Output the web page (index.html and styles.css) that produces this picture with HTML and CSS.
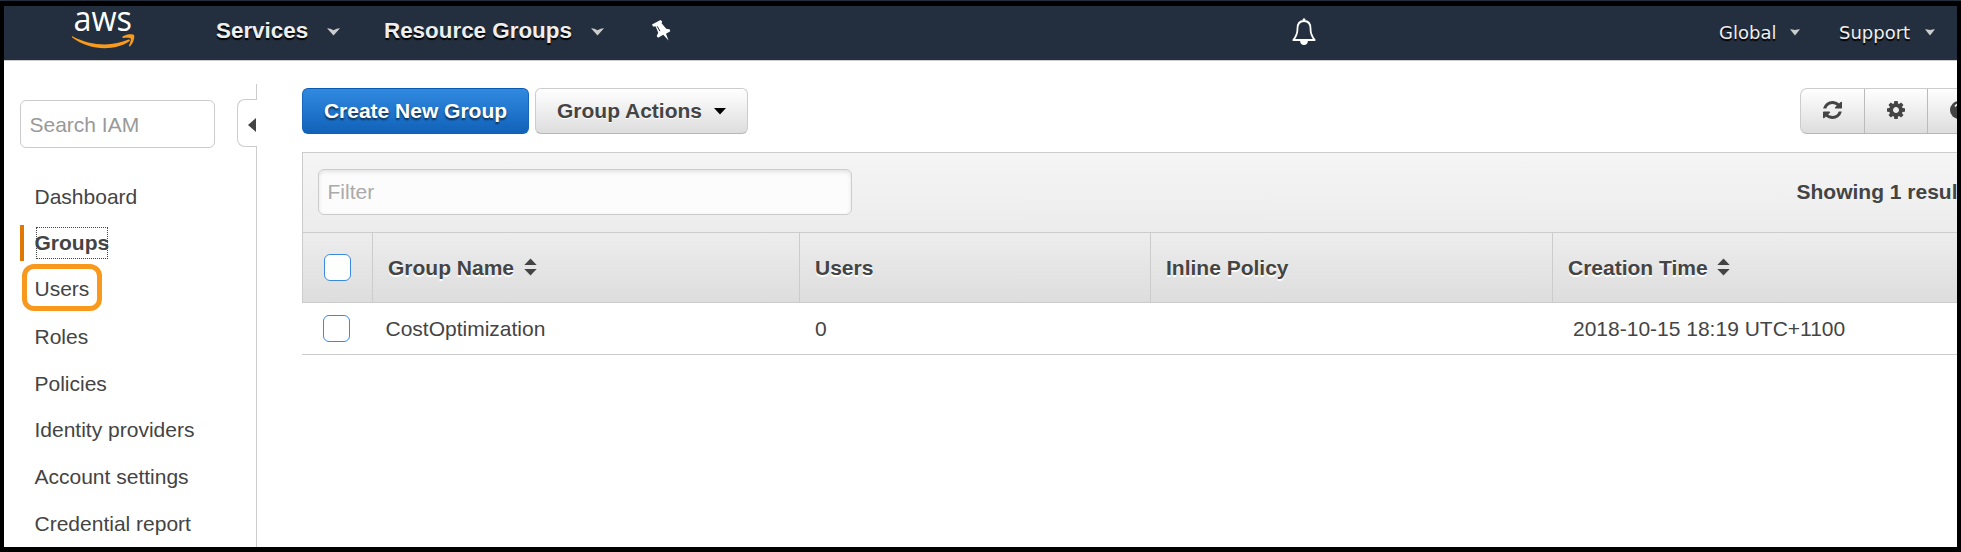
FILE: index.html
```html
<!DOCTYPE html>
<html lang="en">
<head>
<meta charset="utf-8">
<title>IAM Management Console</title>
<link rel="stylesheet" href="styles.css">
</head>
<body>
<div class="frame">
  <header class="topnav">
    <svg class="logo" width="64" height="44" viewBox="0 0 64 44">
      <text class="logo-text" x="1.500" y="25" textLength="58.500" lengthAdjust="spacingAndGlyphs">aws</text>
      <path class="smile" d="M.4 30.200C18 39.800 40 41 56.500 33.600C58 33 58.500 34.500 57.200 35.500C42 45.500 17 44.500 .2 31.500C-.5 30.800 0 30 .4 30.200Z"/>
      <path class="smile" d="M50.500 30.500C55 27.800 61 27.900 62 29.100C63 31 61.500 37.500 58 40.200C57.300 40.700 56.700 40.300 57 39.600C58 37 59.300 33.500 58.600 32.500C57.800 31.500 54 31.700 51.500 32C50.500 32.100 50 31.100 50.500 30.500Z"/>
    </svg>
    <a class="menu services">Services<svg class="caret" width="13" height="8" viewBox="0 0 13 8"><path d="M0 .3Q3.500 .3 6.500 2.300Q9.500 .3 13 .3L6.500 7.500Z"/></svg></a>
    <a class="menu resources">Resource Groups<svg class="caret" width="13" height="8" viewBox="0 0 13 8"><path d="M0 .3Q3.500 .3 6.500 2.300Q9.500 .3 13 .3L6.500 7.500Z"/></svg></a>
    <svg class="pin" width="19" height="21" viewBox="0 0 19 21"><path d="M0 4.500L8.500 0L10.200 1.600L9.600 3.200L14.200 8.700L17.600 9.300L18.300 11.300L14 13.700L16.500 20.500L11.300 14.800L6 17.800L4.700 16L6.200 12.700L3.700 6.500L1 6.600Z"/><path class="pin-line" d="M5.200 6.300L8 11.200"/></svg>
    <svg class="bell" width="26" height="28" viewBox="0 0 26 28"><path d="M13 3C8.500 3 6.500 6.300 6.500 10.500C6.500 16 5.300 18.500 2.300 22H23.700C20.700 18.500 19.500 16 19.500 10.500C19.500 6.300 17.500 3 13 3Z"/><path class="fill" d="M9 23H17Q16.500 27 13 27T9 23ZM11.400 2.500Q11.400 .3 13 .3T14.600 2.500Z"/></svg>
    <a class="menu small global">Global<svg class="caret" width="10" height="7" viewBox="0 0 10 7"><path d="M0 .3Q2.500 .3 5 1Q7.500 .3 10 .3L5 6.500Z"/></svg></a>
    <a class="menu small support">Support<svg class="caret" width="10" height="7" viewBox="0 0 10 7"><path d="M0 .3Q2.500 .3 5 1Q7.500 .3 10 .3L5 6.500Z"/></svg></a>
  </header>
  <div class="body">
    <aside class="sidebar">
      <div class="search">Search IAM</div>
      <nav class="links">
        <a>Dashboard</a>
        <a class="active"><span class="focus">Groups</span></a>
        <a class="marked">Users</a>
        <a>Roles</a>
        <a>Policies</a>
        <a>Identity providers</a>
        <a>Account settings</a>
        <a>Credential report</a>
      </nav>
    </aside>
    <div class="rail">
      <div class="rail-top"></div>
      <div class="collapse"><svg width="8" height="14" viewBox="0 0 8 14"><path d="M8 0V14L0 7Z"/></svg></div>
      <div class="rail-rest"></div>
    </div>
    <main class="content">
      <div class="toolbar">
        <a class="btn primary">Create New Group</a>
        <a class="btn actions">Group Actions<svg width="12" height="7" viewBox="0 0 12 7"><path d="M0 0H12L6 6.500Z"/></svg></a>
        <div class="tools">
          <span class="tool"><svg class="icon" width="19" height="18" viewBox="0 0 1536 1536" preserveAspectRatio="none"><path d="M1511 928q0 5-1 7-64 268-268 434.500T764 1536q-146 0-282.500-55T238 1324l-129 129q-19 19-45 19t-45-19-19-45V960q0-26 19-45t45-19h448q26 0 45 19t19 45-19 45l-137 137q71 66 161 102t187 36q134 0 250-65t186-179q11-17 53-117 8-23 30-23h192q13 0 22.500 9.500t9.500 22.500zM1536 128v448q0 26-19 45t-45 19h-448q-26 0-45-19t-19-45 19-45l138-138Q969 256 768 256q-134 0-250 65T332 500q-11 17-53 117-8 23-30 23H50q-13 0-22.500-9.500T18 608v-7q65-268 270-434.500T768 0q146 0 284 55.500T1297 212l130-129q19-19 45-19t45 19 19 45z"/></svg></span>
          <span class="tool"><svg class="icon" width="18" height="18" viewBox="0 0 1536 1536"><path d="M1024 768q0-106-75-181t-181-75-181 75-75 181 75 181 181 75 181-75 75-181zm512-109v222q0 12-8 23t-20 13l-185 28q-19 54-39 91 35 50 107 138 10 12 10 25t-9 23q-27 37-99 108t-94 71q-12 0-26-9l-138-108q-44 23-91 38-16 136-29 186-7 28-36 28H657q-14 0-24.500-8.500T621 1506l-28-184q-49-16-90-37l-141 107q-10 9-25 9-14 0-25-11-126-114-165-168-7-10-7-23 0-12 8-23 15-21 51-66.500t54-70.500q-27-50-41-99L29 913q-13-2-21-12.500T0 877V655q0-12 8-23t19-13l186-28q14-46 39-92-40-57-107-138-10-12-10-24 0-10 9-23 26-36 98.500-107.500T337 135q13 0 26 10l138 107q44-23 91-38 16-136 29-186 7-28 36-28h222q14 0 24.500 8.500T915 30l28 184q49 16 90 37l142-107q9-9 24-9 13 0 25 10 129 119 165 170 7 8 7 22 0 12-8 23-15 21-51 66.500t-54 70.500q26 50 41 98l183 28q13 2 21 12.500t8 23.500z"/></svg></span>
          <span class="tool last"><svg class="icon" width="18" height="18" viewBox="0 0 18 18"><circle cx="9" cy="9" r="9"/><path class="spark" d="M5 5.500Q7 3 9 3.200"/></svg></span>
        </div>
      </div>
      <section class="table">
        <div class="filterbar">
          <div class="filter">Filter</div>
          <div class="results">Showing 1 resul</div>
        </div>
        <div class="row head">
          <div class="cell"><span class="check"></span></div>
          <div class="cell">Group Name<svg class="sort" width="13" height="18" viewBox="0 0 13 18"><path d="M.3 7L6.500 .5L12.700 7ZM.3 11L6.500 17.500L12.700 11Z"/></svg></div>
          <div class="cell">Users</div>
          <div class="cell">Inline Policy</div>
          <div class="cell">Creation Time<svg class="sort" width="13" height="18" viewBox="0 0 13 18"><path d="M.3 7L6.500 .5L12.700 7ZM.3 11L6.500 17.500L12.700 11Z"/></svg></div>
        </div>
        <div class="row data">
          <div class="cell"><span class="check"></span></div>
          <div class="cell">CostOptimization</div>
          <div class="cell">0</div>
          <div class="cell"></div>
          <div class="cell">2018-10-15 18:19 UTC+1100</div>
        </div>
      </section>
    </main>
  </div>
</div>
</body>
</html>
```

FILE: styles.css
```css
*, *::before, *::after { box-sizing: border-box; }
html, body { margin: 0; overflow: hidden; }
body {
  background: #232f3e;
  padding-top: 1px;
  font: 21px/24px "Liberation Sans", Arial, sans-serif;
  color: #444;
}
svg { display: block; flex: none; }
.frame {
  height: 551px;
  border: solid #000;
  border-width: 5px 4px;
  background: #fff;
  display: flex;
  flex-direction: column;
}

/* top navigation */
.topnav {
  height: 55px;
  flex: none;
  background: #232f3e;
  border-bottom: 1px solid #ccc;
  display: flex;
  align-items: flex-start;
}
.logo { margin-left: 68px; width: 64px; overflow: visible; }
.logo-text { font: 500 34px "Open Sans", sans-serif; fill: #fff; }
.smile { fill: #f89a1c; }
.menu {
  display: flex;
  align-items: center;
  white-space: nowrap;
  font-weight: bold;
  font-size: 22.4px;
  color: #eee;
  text-shadow: 0 2px 1px #000;
  padding-top: 12.500px;
}
.caret { fill: #ccc; }
.services { margin-left: 80px; width: 124px; justify-content: space-between; }
.resources { margin-left: 44px; width: 220px; justify-content: space-between; }
.menu .caret { margin-top: 3px; }
.pin { fill: #fff; margin: 14px 0 0 48px; }
.pin-line { stroke: #232f3e; stroke-width: 1; }
.bell { margin: 12px 0 0 620px; fill: none; stroke: #fff; stroke-width: 1.8; stroke-linejoin: round; }
.bell .fill { fill: #fff; stroke: none; }
.small {
  font: 18px/24px "DejaVu Sans", Verdana, sans-serif;
  padding-top: 15px;
  justify-content: space-between;
}
.menu.small .caret { margin-top: -2px; }
.global { margin-left: 402px; width: 81px; }
.support { margin-left: 39px; width: 96px; }

/* page body */
.body { flex: 1; min-height: 0; display: flex; }
.sidebar { width: 233px; padding: 39px 0 0 16px; }
.search {
  width: 195px;
  height: 48px;
  border: 1px solid #ccc;
  border-radius: 6px;
  padding: 12px 8.500px;
  color: #999;
}
.links { display: flex; flex-direction: column; margin-top: 25px; }
.links a { height: 46.720px; padding: 11.750px 0 0 14.500px; position: relative; white-space: nowrap; }
.links .active { font-weight: bold; padding-top: 11px; }
.links .marked { padding-top: 11px; }
.active::before {
  content: "";
  position: absolute;
  left: 0;
  top: 5px;
  width: 4px;
  height: 36px;
  background: #e07700;
}
.focus { position: relative; }
.focus::after {
  content: "";
  position: absolute;
  left: 1.500px;
  right: 1.500px;
  top: -4px;
  height: 32px;
  border: 1px dotted #444;
}
.marked::after {
  content: "";
  position: absolute;
  left: 2px;
  top: -2px;
  width: 80px;
  height: 47px;
  border: 5px solid #f8991d;
  border-radius: 12px;
}
.rail { width: 20px; padding-top: 23px; display: flex; flex-direction: column; }
.rail-top { height: 15px; border-right: 1px solid #ccc; }
.collapse {
  height: 48px;
  flex: none;
  border: 1px solid #ccc;
  border-right: 0;
  border-radius: 8px 0 0 8px;
  display: flex;
  align-items: center;
  justify-content: flex-end;
  padding: 3px 1px 0 0;
  fill: #444;
}
.rail-rest { flex: 1; border-right: 1px solid #ccc; }

.content { flex: 1; min-width: 0; padding: 27px 0 0 45px; }
.toolbar { display: flex; height: 46px; }
.btn {
  height: 46px;
  display: flex;
  align-items: center;
  justify-content: center;
  border: 1px solid #ccc;
  border-bottom-color: #b7b7b7;
  border-radius: 6px;
  font-weight: bold;
  white-space: nowrap;
  background: linear-gradient(#fff, #ddd);
}
.primary {
  width: 227px;
  color: #fff;
  background: linear-gradient(#3189e0, #1162b9);
  border-color: #0a5bb0 #1567bd #1162b3;
  text-shadow: 0 2px 2px rgba(0, 0, 0, .6);
}
.actions { width: 213px; margin-left: 6px; gap: 12px; fill: #000; text-shadow: 0 1px 0 #fff; }
.tools {
  margin-left: auto;
  width: 157px;
  height: 46px;
  display: flex;
  border: 1px solid #ccc;
  border-right: 0;
  border-bottom-color: #b7b7b7;
  border-radius: 7px 0 0 7px;
  background: linear-gradient(#fff, #ddd);
  overflow: hidden;
}
.tool {
  width: 63px;
  flex: none;
  border-right: 1px solid #bbb;
  display: flex;
  align-items: center;
  justify-content: center;
  padding-bottom: 2px;
}
.tool:first-child { width: 64px; }
.tool .icon { fill: #444; }
.tool .spark { fill: none; stroke: #fff; stroke-width: 1.5; }
.tool.last { border: 0; justify-content: flex-start; padding-left: 22px; }

/* groups table */
.table { margin-top: 18px; }
.filterbar {
  height: 80px;
  display: flex;
  justify-content: space-between;
  align-items: center;
  border: solid #ccc;
  border-width: 1px 0 0 1px;
  background: linear-gradient(#f5f5f5, #ececec);
  padding: 0 0 2px 15px;
}
.filter {
  width: 534px;
  height: 46px;
  border: 1px solid #ccc;
  border-radius: 6px;
  background: #fcfcfc;
  box-shadow: inset 0 2px 4px rgba(0, 0, 0, .1);
  color: #aaa;
  padding: 10px 8.500px;
}
.results { width: 160.500px; font-weight: bold; white-space: nowrap; }
.row { display: grid; grid-template-columns: 70px 427px 351px 402px 1fr; }
.row .cell { display: flex; align-items: center; white-space: nowrap; padding-left: 15px; }
.head {
  height: 71px;
  border: solid #ccc;
  border-width: 1px 0 1px 1px;
  background: linear-gradient(#ededed, #ddd);
  font-weight: bold;
  text-shadow: 0 2px 1px #fff;
}
.head .cell { border-right: 1px solid #ccc; }
.head .cell:first-child { padding-left: 21px; }
.head .cell:last-child { border-right: 0; }
.sort { fill: #444; margin: -2px 0 0 9.500px; }
.data { height: 52px; border-bottom: 1px solid #ccc; }
.data .cell:first-child { padding-left: 21px; }
.data .cell:nth-child(2) { padding-left: 13.500px; }
.data .cell:nth-child(3) { padding-left: 16px; }
.data .cell:last-child { padding-left: 21px; }
.check {
  width: 27px;
  height: 27px;
  border: 1px solid #3b8ade;
  border-radius: 6px;
  background: #fff;
}
```
